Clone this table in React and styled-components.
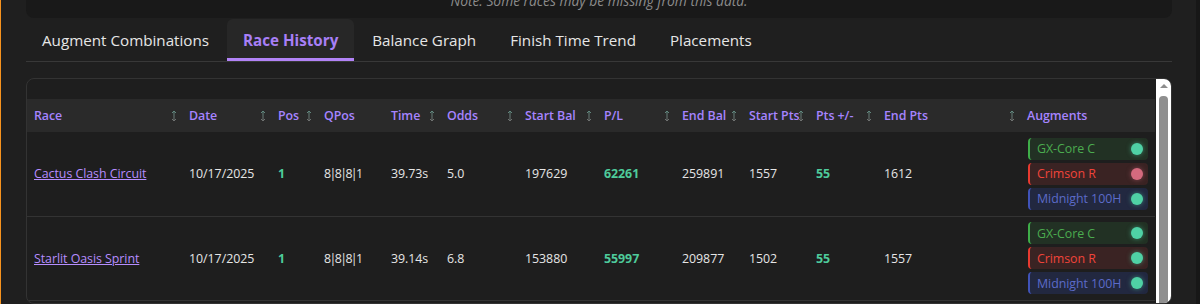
import React from "react";
import styled, { createGlobalStyle } from "styled-components";

const Global = createGlobalStyle`
  html, body { margin: 0; padding: 0; background: #1f1f1f; }
  body { font-family: "Open Sans", "Noto Sans", sans-serif; }
  * { box-sizing: border-box; }
`;

const Page = styled.div`
  width: 1200px;
  height: 304px;
  overflow: hidden;
  background: #1f1f1f;
  border-left: 1px solid #f7931e;
  border-right: 4px solid #171717;
  padding: 0 24px 0 25px;
  display: flex;
  flex-direction: column;
`;

const Note = styled.div`
  height: 18px;
  background: #191919;
  border-radius: 0 0 8px 8px;
  overflow: hidden;
  display: flex;
  justify-content: center;
  flex-shrink: 0;
`;

const NoteText = styled.span`
  margin-top: -8px;
  font-size: 13.8px;
  line-height: 18px;
  font-style: italic;
  color: #8c8c8c;
`;

const TabBar = styled.div`
  margin-top: 1px;
  display: flex;
  gap: 2px;
  border-bottom: 1px solid #383838;
  flex-shrink: 0;
`;

const Tab = styled.div`
  height: 42px;
  padding: 3px 16px 0;
  display: flex;
  align-items: center;
  font-size: 15.2px;
  font-weight: ${(p) => (p.$active ? 700 : 400)};
  color: ${(p) => (p.$active ? "#a77ff7" : "#e6e6e6")};
  background: ${(p) => (p.$active ? "#272727" : "transparent")};
  border-radius: 6px 6px 0 0;
  border-bottom: 3px solid ${(p) => (p.$active ? "#b283f7" : "transparent")};
  white-space: nowrap;
`;

const Card = styled.div`
  margin-top: 16px;
  border: 1px solid #333;
  border-radius: 8px;
  background: #1e1e1e;
  display: flex;
  flex: 1;
  overflow: hidden;
`;

const TableArea = styled.div`
  flex: 1;
  padding-top: 20px;
  overflow: hidden;
`;

const Table = styled.table`
  width: 1128px;
  table-layout: fixed;
  border-collapse: collapse;
  font-size: 12.4px;
  letter-spacing: -0.05px;
  color: #e6e6e6;
`;

const HeadRow = styled.tr`
  background: #2a2a2a;
  height: 33px;
`;

const Th = styled.th`
  position: relative;
  text-align: left;
  padding: 0 7px;
  font-weight: 600;
  color: #a684ff;
  white-space: nowrap;
  vertical-align: middle;
`;

const SortIcon = styled.svg`
  position: absolute;
  right: 5px;
  top: 50%;
  margin-top: -6px;
`;

const Row = styled.tr`
  height: 84px;
  border-bottom: 1px solid #333;
`;

const Td = styled.td`
  padding: ${(p) => (p.$aug ? "5px 7px 5px 8px" : "0 7px")};
  vertical-align: middle;
  white-space: nowrap;
  font-weight: ${(p) => (p.$good ? 700 : 400)};
  color: ${(p) => (p.$good ? "#4ecb9b" : "#e6e6e6")};
  letter-spacing: ${(p) => (p.$tight ? "-1.6px" : "inherit")};
`;

const RaceLink = styled.a`
  color: #b68dff;
  text-decoration: underline;
  cursor: pointer;
`;

const AugList = styled.div`
  display: flex;
  flex-direction: column;
  gap: 3px;
  width: 120px;
`;

const AUG = {
  green: { bg: "#223124", bar: "#3fae49", fg: "#4bab4f" },
  red: { bg: "#3a2323", bar: "#e83a30", fg: "#f0443a" },
  blue: { bg: "#222840", bar: "#4053b8", fg: "#5c6bc8" },
};

const Badge = styled.div`
  height: 22px;
  border-radius: 4px;
  border-left: 2px solid ${(p) => AUG[p.$kind].bar};
  background: ${(p) => AUG[p.$kind].bg};
  color: ${(p) => AUG[p.$kind].fg};
  display: flex;
  align-items: center;
  justify-content: space-between;
  padding: 0 5px 0 7px;
  font-size: 12.4px;
`;

const Dot = styled.span`
  width: 12px;
  height: 12px;
  border-radius: 50%;
  background: ${(p) => (p.$bad ? "#d46a7e" : "#4fd1a5")};
  box-shadow: 0 0 5px ${(p) => (p.$bad ? "rgba(212,106,126,0.5)" : "rgba(79,209,165,0.55)")};
`;

const Scrollbar = styled.div`
  width: 15px;
  background: #ffffff;
  display: flex;
  flex-direction: column;
  align-items: center;
  padding-top: 5px;
  flex-shrink: 0;
`;

const ArrowUp = styled.div`
  width: 0;
  height: 0;
  border-left: 4px solid transparent;
  border-right: 4px solid transparent;
  border-bottom: 4px solid #8d8d8d;
`;

const Thumb = styled.div`
  margin-top: 8px;
  width: 9px;
  flex: 1;
  background: #8f8f8f;
  border-radius: 4px 4px 0 0;
`;

const cols = [
  { label: "Race", w: 155, sort: true },
  { label: "Date", w: 89, sort: true },
  { label: "Pos", w: 46, sort: true },
  { label: "QPos", w: 67, sort: false },
  { label: "Time", w: 56, sort: true },
  { label: "Odds", w: 78, sort: true },
  { label: "Start Bal", w: 79, sort: true },
  { label: "P/L", w: 78, sort: true },
  { label: "End Bal", w: 67, sort: true },
  { label: "Start Pts", w: 67, sort: true },
  { label: "Pts +/-", w: 68, sort: true },
  { label: "End Pts", w: 143, sort: true },
  { label: "Augments", w: 135, sort: false },
];

const rows = [
  {
    race: "Cactus Clash Circuit", date: "10/17/2025", pos: "1", qpos: "8|8|8|1", time: "39.73s",
    odds: "5.0", sb: "197629", pl: "62261", eb: "259891", sp: "1557", pd: "55", ep: "1612",
    augs: [["green", "GX-Core C", false], ["red", "Crimson R", true], ["blue", "Midnight 100H", false]],
  },
  {
    race: "Starlit Oasis Sprint", date: "10/17/2025", pos: "1", qpos: "8|8|8|1", time: "39.14s",
    odds: "6.8", sb: "153880", pl: "55997", eb: "209877", sp: "1502", pd: "55", ep: "1557",
    augs: [["green", "GX-Core C", false], ["red", "Crimson R", false], ["blue", "Midnight 100H", false]],
  },
];

const Sort = () => (
  <SortIcon width="6" height="12" viewBox="0 0 6 12">
    <defs>
      <linearGradient id="sg" x1="0" y1="0" x2="0" y2="1">
        <stop offset="0" stopColor="#5f8a80" />
        <stop offset="1" stopColor="#707070" />
      </linearGradient>
    </defs>
    <path d="M3 1 V11 M1 3 L3 1 L5 3 M1 9 L3 11 L5 9" stroke="url(#sg)" strokeWidth="1" fill="none" />
  </SortIcon>
);

export default function App() {
  return (
    <>
      <Global />
      <Page>
        <Note>
          <NoteText>Note: Some races may be missing from this data.</NoteText>
        </Note>
        <TabBar>
          <Tab>Augment Combinations</Tab>
          <Tab $active>Race History</Tab>
          <Tab>Balance Graph</Tab>
          <Tab>Finish Time Trend</Tab>
          <Tab>Placements</Tab>
        </TabBar>
        <Card>
          <TableArea>
            <Table>
              <colgroup>
                {cols.map((c) => (
                  <col key={c.label} style={{ width: c.w }} />
                ))}
              </colgroup>
              <thead>
                <HeadRow>
                  {cols.map((c) => (
                    <Th key={c.label}>
                      {c.label}
                      {c.sort && <Sort />}
                    </Th>
                  ))}
                </HeadRow>
              </thead>
              <tbody>
                {rows.map((r) => (
                  <Row key={r.race}>
                    <Td><RaceLink>{r.race}</RaceLink></Td>
                    <Td>{r.date}</Td>
                    <Td $good>{r.pos}</Td>
                    <Td $tight>{r.qpos}</Td>
                    <Td>{r.time}</Td>
                    <Td>{r.odds}</Td>
                    <Td>{r.sb}</Td>
                    <Td $good>{r.pl}</Td>
                    <Td>{r.eb}</Td>
                    <Td>{r.sp}</Td>
                    <Td $good>{r.pd}</Td>
                    <Td>{r.ep}</Td>
                    <Td $aug>
                      <AugList>
                        {r.augs.map(([k, name, bad]) => (
                          <Badge key={name} $kind={k}>
                            {name}
                            <Dot $bad={bad} />
                          </Badge>
                        ))}
                      </AugList>
                    </Td>
                  </Row>
                ))}
              </tbody>
            </Table>
          </TableArea>
          <Scrollbar>
            <ArrowUp />
            <Thumb />
          </Scrollbar>
        </Card>
      </Page>
    </>
  );
}
